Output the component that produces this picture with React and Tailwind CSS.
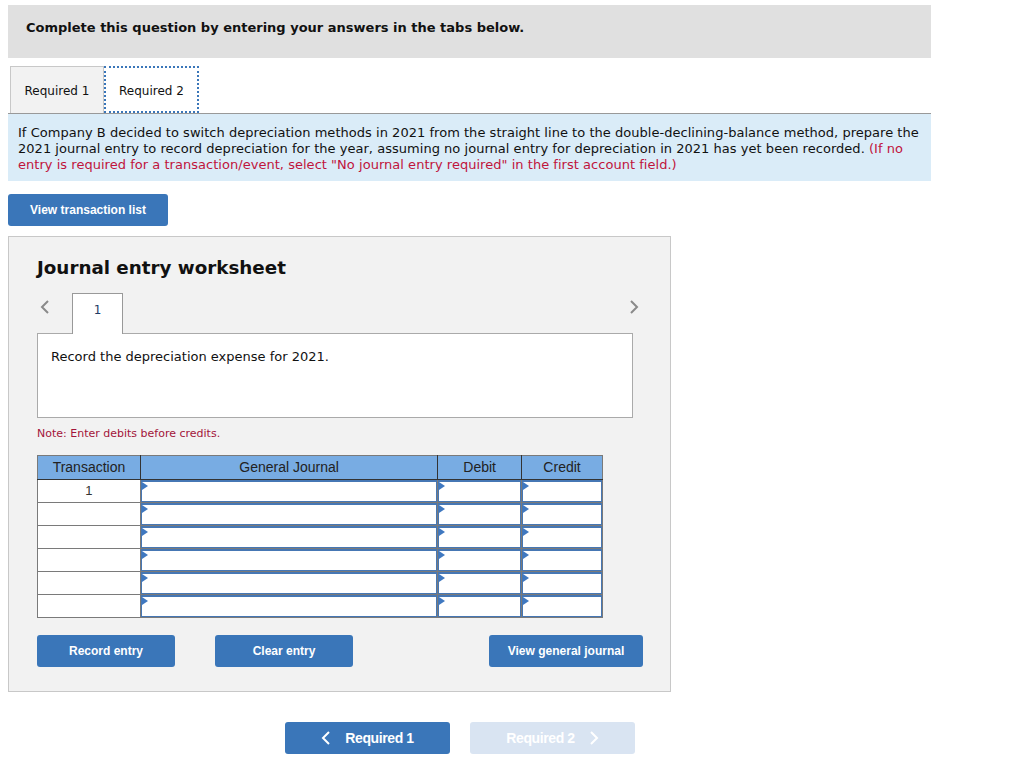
import React from "react";

const verdana = { fontFamily: '"DejaVu Sans", Verdana, sans-serif' };

function Chevron({ dir = "left", className = "" }) {
  return (
    <svg width="10" height="16" viewBox="0 0 10 16" className={className}>
      {dir === "left" ? (
        <polyline points="8,2 2,8 8,14" fill="none" stroke="currentColor" strokeWidth="2" />
      ) : (
        <polyline points="2,2 8,8 2,14" fill="none" stroke="currentColor" strokeWidth="2" />
      )}
    </svg>
  );
}

function InputCell({ w }) {
  return (
    <td className={`${w} p-0 border border-[#7a7a7a] align-top`}>
      <div className="relative h-[22px] bg-white border border-[#4677b4] border-t-2">
        <span className="absolute left-0 top-0 w-0 h-0 border-t-[4px] border-b-[4px] border-l-[6px] border-t-transparent border-b-transparent border-l-[#3f78c0]" />
      </div>
    </td>
  );
}

function Btn({ children, className = "" }) {
  return (
    <button
      className={`h-8 rounded-[3px] bg-[#3a76b9] text-white text-[12px] font-bold flex items-center justify-center ${className}`}
      style={{ fontFamily: '"Liberation Sans", Arial, sans-serif' }}
    >
      {children}
    </button>
  );
}

export default function App() {
  const rows = [1, 2, 3, 4, 5, 6];
  return (
    <div className="w-[1029px] min-h-[775px] bg-white px-2 pt-[5px] text-[#111]" style={verdana}>
      <div className="w-[923px] h-[53px] bg-[#e0e0e0] pl-[18px] pt-[15px] text-[13px] font-bold leading-[16px]">
        Complete this question by entering your answers in the tabs below.
      </div>

      <div className="flex mt-2 ml-[2px] h-[47px]">
        <div className="w-[94px] h-full bg-[#f2f2f2] border border-[#c8c8c8] border-b-0 flex items-center justify-center pt-[2px] text-[12px]">
          Required 1
        </div>
        <div className="w-[95px] h-full bg-white border-2 border-dotted border-[#3a76b9] flex items-center justify-center pt-[2px] text-[12px]">
          Required 2
        </div>
      </div>

      <div className="w-[923px] bg-[#daecf8] border-t border-[#999] pl-[10px] pr-2 pt-[11px] pb-[8px] text-[13px] leading-[16px] tracking-[0.03px]">
        If Company B decided to switch depreciation methods in 2021 from the straight line to the double-declining-balance method, prepare the 2021 journal entry to record depreciation for the year, assuming no journal entry for depreciation in 2021 has yet been recorded.{" "}
        <span className="text-[#c0143c]">(If no entry is required for a transaction/event, select "No journal entry required" in the first account field.)</span>
      </div>

      <Btn className="mt-[13px] w-[160px]">View transaction list</Btn>

      <div className="mt-[10px] w-[663px] h-[456px] bg-[#f2f2f2] border border-[#c8c8c8] pl-[28px] pt-[20px]">
        <div className="text-[18.3px] font-bold leading-[22px]">Journal entry worksheet</div>

        <div className="mt-[14px] w-[595px] flex items-end h-[40px] relative">
          <Chevron dir="left" className="text-[#8a8a8a] absolute left-[3px] top-[6px]" />
          <div className="ml-[35px] w-[51px] h-[41px] -mb-px bg-white border border-[#999] border-b-0 relative z-10 flex justify-center pt-[7px] text-[12px] text-[#1f3c66]">
            1
          </div>
          <Chevron dir="right" className="text-[#8a8a8a] absolute right-[-7px] top-[6px]" />
        </div>
        <div className="w-[596px] h-[85px] bg-white border border-[#aaa] pl-[13px] pt-[15px] text-[13px] leading-[16px]">
          Record the depreciation expense for 2021.
        </div>

        <div className="mt-[8px] text-[11px] leading-[14px] text-[#a3143a] pt-px">Note: Enter debits before credits.</div>

        <table
          className="mt-[14px] border-collapse border border-[#7a7a7a] w-[566px] text-[14px]"
          style={{ fontFamily: '"Liberation Sans", Arial, sans-serif' }}
        >
          <thead>
            <tr className="bg-[#78ace3] h-[24px] text-[#222]">
              <th className="w-[103px] font-normal leading-[16px] pb-[2px] border border-[#333] border-l-[#7a7a7a] border-t-[#7a7a7a]">Transaction</th>
              <th className="w-[298px] font-normal leading-[16px] pb-[2px] border border-[#333] border-t-[#7a7a7a]">General Journal</th>
              <th className="w-[84px] font-normal leading-[16px] pb-[2px] border border-[#333] border-t-[#7a7a7a]">Debit</th>
              <th className="w-[81px] font-normal leading-[16px] pb-[2px] border border-[#333] border-t-[#7a7a7a] border-r-[#7a7a7a]">Credit</th>
            </tr>
          </thead>
          <tbody>
            {rows.map((r) => (
              <tr key={r} className="h-[23px]">
                <td className="border border-[#7a7a7a] bg-white text-center align-middle text-[13px] text-[#333]">{r === 1 ? "1" : ""}</td>
                <InputCell w="w-[298px]" />
                <InputCell w="w-[84px]" />
                <InputCell w="w-[81px]" />
              </tr>
            ))}
          </tbody>
        </table>

        <div className="mt-[17px] flex w-[606px]">
          <Btn className="w-[138px]">Record entry</Btn>
          <Btn className="w-[138px] ml-[40px]">Clear entry</Btn>
          <Btn className="w-[154px] ml-auto">View general journal</Btn>
        </div>
      </div>

      <div className="mt-[30px] ml-[277px] flex gap-5">
        <Btn className="w-[165px] text-[14px] tracking-[-0.4px] gap-[14px]">
          <Chevron dir="left" className="text-white" />
          <span>Required 1</span>
        </Btn>
        <button
          className="w-[165px] h-8 rounded-[3px] bg-[#d9e4f2] text-white text-[14px] font-bold tracking-[-0.4px] flex items-center justify-center gap-[14px]"
          style={{ fontFamily: '"Liberation Sans", Arial, sans-serif' }}
        >
          <span>Required 2</span>
          <Chevron dir="right" className="text-white" />
        </button>
      </div>
    </div>
  );
}
